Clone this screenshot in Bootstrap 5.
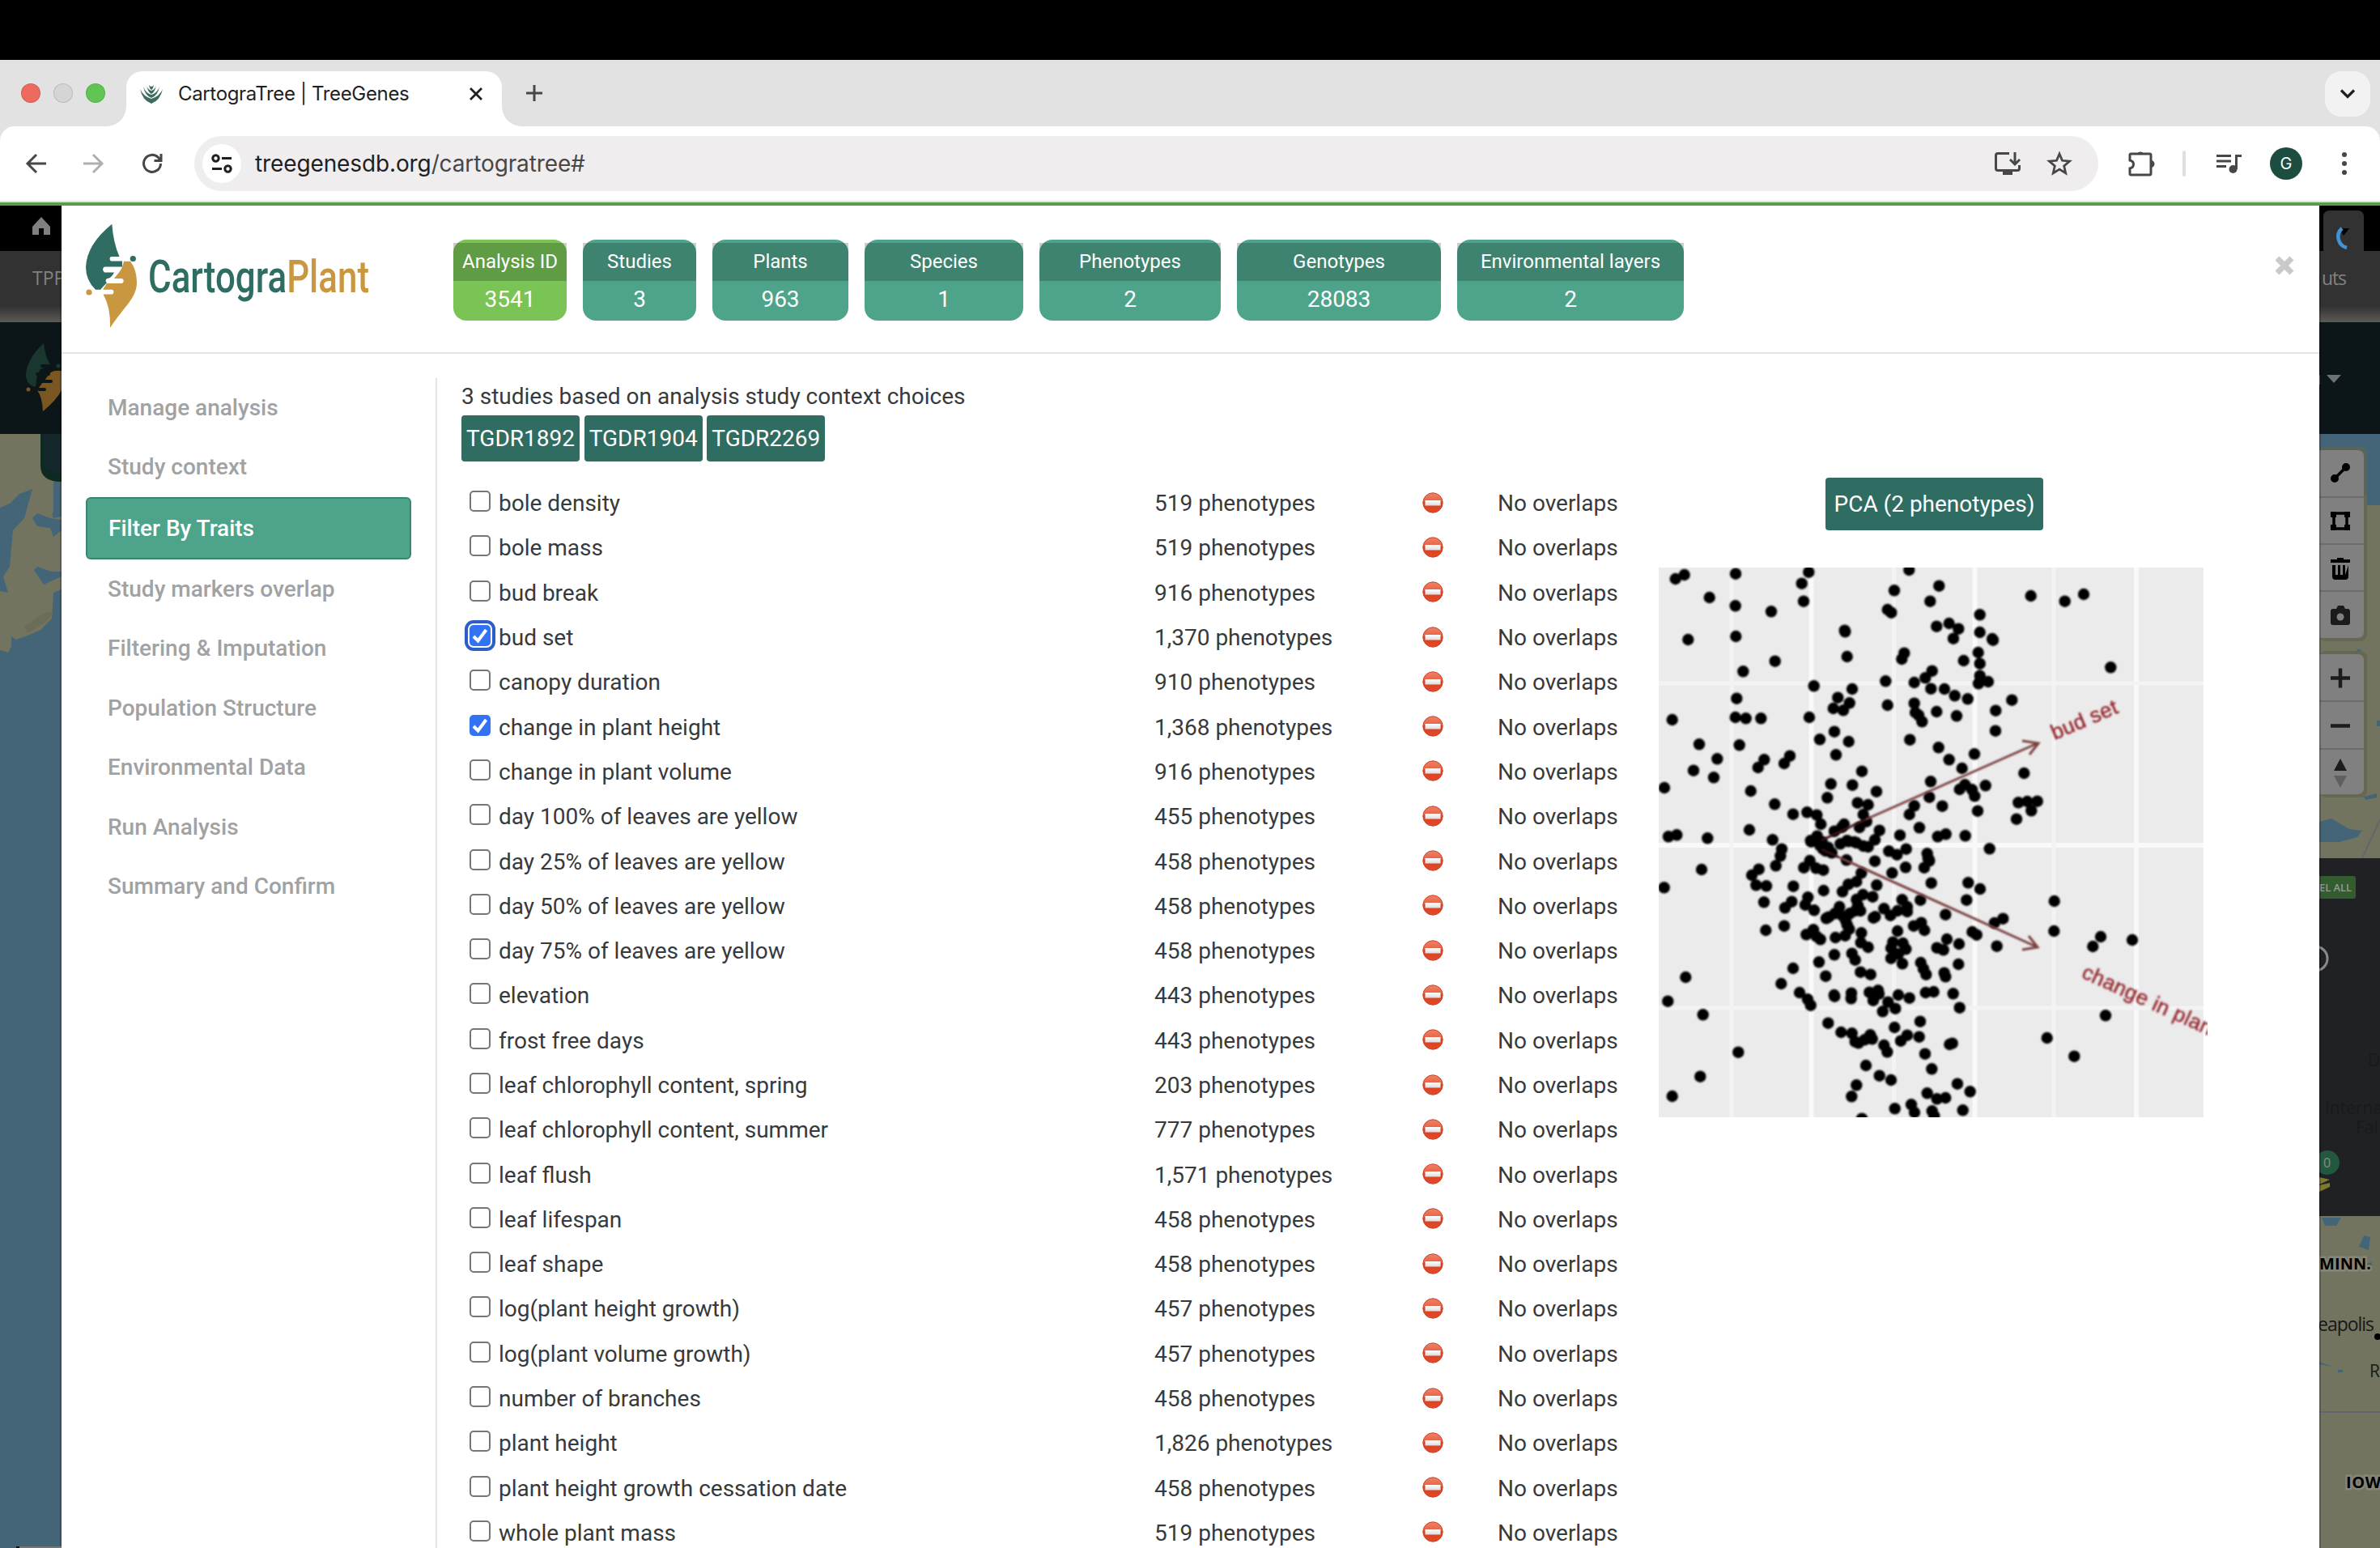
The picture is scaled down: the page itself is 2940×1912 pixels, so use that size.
<!DOCTYPE html>
<html lang="en">
<head>
<meta charset="utf-8">
<title>CartograTree | TreeGenes</title>
<link href="https://cdn.jsdelivr.net/npm/bootstrap@5.3.0/dist/css/bootstrap.min.css" rel="stylesheet">
<style>
  body { width: 2940px; height: 1912px; overflow: hidden; background: #fff; font: 400 28px/1.5 Roboto, sans-serif; color: #373a3c; }
  svg { display: block; flex: none; }
  .menu-strip { height: 74px; background: #000; }
  .tab-strip { height: 82px; background: #e2e2e2; font-family: Inter, sans-serif; color: #1f1f1f; }
  .lights { width: 156px; padding-left: 26px; gap: 16px; height: 82px; }
  .light { width: 24px; height: 24px; border-radius: 50%; border: 1px solid rgba(0,0,0,.12); }
  .browser-tab { width: 464px; height: 68px; margin-top: 14px; background: #fff; border-radius: 20px 20px 0 0; position: relative; padding: 0 23px 13px 17px; }
  .browser-tab::before, .browser-tab::after { content: ""; position: absolute; bottom: 0; width: 24px; height: 24px; }
  .browser-tab::before { left: -24px; background: radial-gradient(circle at 0 0, transparent 23.5px, #fff 24px); }
  .browser-tab::after { right: -24px; background: radial-gradient(circle at 100% 0, transparent 23.5px, #fff 24px); }
  .tab-title { font-size: 24px; letter-spacing: -.35px; margin-left: 19px; white-space: nowrap; }
  .tab-menu { width: 56px; height: 56px; border-radius: 20px; background: #f2f2f2; margin: 14px 12px 0 auto; }
  .strip-bg { background: #e2e2e2; }
  .toolbar { height: 92px; background: #fff; border-radius: 18px 18px 0 0; font-family: Inter, sans-serif; }
  .nav-icons { width: 240px; padding-left: 30px; gap: 44px; }
  .omnibox { width: 2352px; height: 68px; border-radius: 34px; background: #efedee; padding: 0 32px 0 10px; }
  .site-info { width: 48px; height: 48px; border-radius: 50%; background: #fff; }
  .address { font-size: 28px; margin-left: 17px; color: #1f1f1f; letter-spacing: -.12px; }
  .address span { color: #474747; }
  .avatar-g { width: 40px; height: 40px; border-radius: 50%; background: #1d4d40; color: #fff; font-size: 20px; }
  .rule { height: 6px; background: #5a9c4c; border-top: 2px solid #dbe5e0; }
  .stage { height: 1658px; }
  .dialog-pane { width: 2789px; background: #fff; }
  .dialog-top { height: 183px; border-bottom: 2px solid #e5e5e5; padding: 0 0 0 29px; }
  .stats { margin: 42px 0 0 100px; gap: 20px; }
  .stat { height: 100px; border-radius: 16px; background: #4da48b; color: #fff; text-align: center; padding-top: 4px; }
  .stat.current { background: #79c455; }
  .stat-name { height: 47px; line-height: 46px; font-size: 24px; background: rgba(0,0,0,.2); white-space: nowrap; }
  .stat-num { line-height: 45px; }
  .side { width: 462px; padding: 30px 30px 0 30px; }
  .side .nav-link { height: 73.5px; padding: 0 0 0 27px; display: flex; align-items: center; color: #a0a2a3; font-weight: 500; }
  .side .nav-link.active { height: 77px; padding-left: 26px; color: #fff; background: #4da48b; border: 2px solid #3a8570; border-radius: 6px; }
  .main-col { margin-top: 30px; border-left: 2px solid #e5e5e5; padding: 2px 0 0 30px; width: 2325px; }
  .chip { background: #2f6c62; color: #fff; border-radius: 4px; height: 57px; line-height: 57px; padding: 0 6px; }
  .trait-list { width: 1479px; margin-top: 24px; }
  .trait { height: 55.3px; padding-top: 1px; }
  .trait-name { width: 856px; padding-left: 10px; }
  .trait-name input { appearance: none; width: 26px; height: 26px; border: 2px solid #767676; border-radius: 5px; background: #fff; margin: 0 10px 6px 0; flex: none; }
  .trait-name input:checked { border: 0; background: #3273f6 url("data:image/svg+xml,%3Csvg xmlns='http://www.w3.org/2000/svg' viewBox='0 0 26 26'%3E%3Cpath d='M5 14l5.500 5.500L20.500 6' fill='none' stroke='%23fff' stroke-width='4'/%3E%3C/svg%3E"); }
  .trait-name input.focused { outline: 4px solid #2a5fc8; outline-offset: 2px; }
  .trait-count { width: 331px; }
  .trait-mark { width: 93px; padding-bottom: 3px; }
  .pca-btn { background: #2f6c62; color: #fff; border-radius: 4px; height: 65px; width: 269px; font-size: 28px; padding: 0; border: 0; margin: 20px 0 46px 206px; }
</style>
<script src="https://cdn.jsdelivr.net/npm/bootstrap@5.3.0/dist/js/bootstrap.bundle.min.js"></script>
</head>
<body>
<div class="menu-strip"></div>
<div class="tab-strip d-flex align-items-start">
  <div class="lights d-flex align-items-center"><i class="light" style="background:#ed6a5e"></i><i class="light" style="background:#d5d5d5"></i><i class="light" style="background:#61c554"></i></div>
  <div class="browser-tab d-flex align-items-center">
    <svg width="28" height="24" viewBox="0 0 28 24" fill="#3f6b62"><path d="M0 6Q4 15 14 18Q24 15 28 6Q25 20 14 24Q3 20 0 6ZM4 3Q7 11 14 13Q21 11 24 3Q22 14 14 17Q6 14 4 3ZM8 2Q10 7 14 8Q18 7 20 2Q18 10 14 12Q10 10 8 2ZM11 1Q14 5 17 1Q16 6 14 7Q12 6 11 1Z"/></svg>
    <span class="tab-title">CartograTree | TreeGenes</span>
    <svg class="ms-auto" width="18" height="18" viewBox="0 0 18 18" stroke="#1f1f1f" stroke-width="2.800"><path d="M2 2l14 14M16 2L2 16"/></svg>
  </div>
  <svg width="22" height="22" viewBox="0 0 22 22" stroke="#474747" stroke-width="3" style="margin:30px 0 0 29px"><path d="M11 1v20M1 11h20"/></svg>
  <div class="tab-menu d-flex align-items-center justify-content-center"><svg width="20" height="14" viewBox="0 0 20 14" fill="none" stroke="#1f1f1f" stroke-width="3.200"><path d="M2 2.500l8 8 8-8"/></svg></div>
</div>
<div class="strip-bg"><div class="toolbar d-flex align-items-center">
  <div class="nav-icons d-flex">
    <svg width="28" height="28" viewBox="0 0 28 28" fill="none" stroke="#474747" stroke-width="3"><path d="M27 14H5M15 3L4 14l11 11"/></svg>
    <svg width="28" height="28" viewBox="0 0 28 28" fill="none" stroke="#b0b0b0" stroke-width="3"><path d="M1 14h22M13 3l11 11-11 11"/></svg>
    <svg width="28" height="28" viewBox="0 0 28 28" fill="none" stroke="#474747" stroke-width="3"><path d="M24.500 14a10.500 10.500 0 1 1-3-7.500l2.500 3M25 2v8.500h-8.500"/></svg>
  </div>
  <div class="omnibox d-flex align-items-center">
    <div class="site-info d-flex align-items-center justify-content-center"><svg width="26" height="24" viewBox="0 0 26 24" fill="none" stroke="#1f1f1f" stroke-width="3"><circle cx="5.500" cy="5.500" r="3.700"/><circle cx="20.500" cy="18.500" r="3.700"/><path d="M13 5.500h12M1 18.500h12"/></svg></div>
    <div class="address">treegenesdb.org<span>/cartogratree#</span></div>
    <svg class="ms-auto" width="34" height="30" viewBox="0 0 34 30" fill="none" stroke="#474747" stroke-width="3"><path d="M19 2.500H5q-2.500 0-2.500 2.500v16q0 2.500 2.500 2.500h24q2.500 0 2.500-2.500v-4M26 1v14M20 10l6 6 6-6"/><path d="M11 24h12v5H11z" fill="#474747" stroke="none"/></svg>
    <svg style="margin-left:31px" width="32" height="32" viewBox="0 0 32 32" fill="none" stroke="#474747" stroke-width="2.800"><path d="M16 4l3.500 8.300 9 .8-6.800 5.900 2 8.800L16 23.100l-7.700 4.700 2-8.800-6.800-5.900 9-.8z"/></svg>
  </div>
  <svg style="margin-left:36px" width="34" height="34" viewBox="0 0 34 34" fill="none" stroke="#474747" stroke-width="3"><path d="M3 6.500q0-1.500 1.500-1.500h23q1.500 0 1.500 1.500v23q0 1.500-1.500 1.500h-23Q3 31 3 29.500V23q4.500-1 4.500-5T3 13z"/><path d="M12 5a4.500 4.500 0 0 1 8 0zM29 13a4.500 4.500 0 0 1 0 9z" fill="#474747" stroke="none"/></svg>
  <div style="width:4px;height:32px;border-radius:2px;background:#dfdfdf;margin-left:34px"></div>
  <svg style="margin-left:38px" width="32" height="26" viewBox="0 0 32 26" fill="none" stroke="#474747" stroke-width="3"><path d="M0 3.500h18M0 10h18M0 16.500h12M24.500 20V3.500H31"/><circle cx="20.500" cy="20" r="5" fill="#474747" stroke="none"/></svg>
  <div class="avatar-g d-flex align-items-center justify-content-center" style="margin-left:34px">G</div>
  <svg style="margin-left:49px" width="6" height="30" viewBox="0 0 6 30" fill="#474747"><circle cx="3" cy="4" r="3"/><circle cx="3" cy="15" r="3"/><circle cx="3" cy="26" r="3"/></svg>
</div></div>
<div class="rule"></div>

<div class="stage d-flex">
  <svg width="76" height="1658" viewBox="0 254 76 1658" font-family="Open Sans, sans-serif">
    <defs><linearGradient id="fade" x2="0" y2="1"><stop stop-color="#323232"/><stop offset="1" stop-color="#5c5b56"/></linearGradient></defs>
    <rect y="254" width="76" height="1658" fill="#446577"/>
    <path d="M0 536H76V590L66 595V636L76 634V642L62 640L46 634L40 640L46 650L62 652L66 663L76 655V728L66 732L64 764L50 778L34 785L20 790L14 786V798L10 806L0 803V730L10 732L4 712L12 700L16 655L30 640L40 604L24 610L12 622L0 627Z" fill="#727460"/>
    <path d="M76 632L64 634L66 640L76 638ZM76 712L54 722L42 704L46 700L64 706L76 706Z" fill="#446577"/>
    <path d="M30 774L58 755L66 757L54 770L34 782Z" fill="#6b6d58"/>
    <path d="M50 536h26v59q-26 0-26-20z" fill="#0e2a20"/><path d="M54 536h22v50q-22 0-22-16z" fill="#14282b"/>
    <rect y="254" width="76" height="56" fill="#000"/><rect y="310" width="76" height="68" fill="#323232"/><rect y="378" width="76" height="20" fill="url(#fade)"/><rect y="398" width="76" height="138" fill="#0c1619"/>
    <path d="M40 280L51 268L62 280V290H54V282H48V290H40Z" fill="#808080"/>
    <text x="40" y="352" font-size="23" fill="#828282">TPP</text>
    <path d="M54 424Q56 442 62 450L50 456L46 462L44 478Q32 476 32 462Q34 442 54 424Z" fill="#19362f"/>
    <path d="M76 458Q62 456 58 466L50 476L46 482Q52 490 53 508Q70 494 76 482Z" fill="#7a5622"/>
    <g stroke="#0c1619" stroke-width="4" stroke-linecap="round"><path d="M52 452h8M46 462h14M52 471h11M48 481h7"/></g>
    <circle cx="72" cy="452" r="2.500" fill="#19362f"/><circle cx="35" cy="481" r="2.500" fill="#7a5622"/>
    <rect x="74" y="254" width="2" height="1658" fill="#000" opacity=".2"/><path d="M20 1910h4v2h-4z" fill="#111"/><path d="M24 1910h52v2H24z" fill="#777"/>
  </svg>

  <div class="dialog-pane">
    <div class="dialog-top d-flex">
      <svg width="355" height="180" viewBox="105 254 355 180" font-family="Roboto" font-weight="500" font-size="56">
        <path d="M138.300 276.700Q140 300 147.500 317H137Q134 319.700 137 322.500H151V329.500H129Q125 332.500 129 336.500H141Q138 343 133 344H132Q129 347 132 349L124 357.700H118Q106 346 106 330Q107 302 138.300 276.700Z" fill="#2f6c62"/>
        <path d="M153 322.800H161Q169 333 169 349C169 368 153 379 136 405Q137 380 127.500 363.500H139Q142 360.500 139 357.700H127L132 350H151Q154.500 347 151 344H141L147 336.500Q151 332 153 322.800Z" fill="#c99740"/>
        <circle cx="164.300" cy="319.500" r="3.600" fill="#2f6c62"/><circle cx="110" cy="361" r="3.600" fill="#c99740"/>
        <text x="183" y="361" textLength="273" lengthAdjust="spacingAndGlyphs" fill="#2f6c62">Cartogra<tspan fill="#c99740">Plant</tspan></text>
      </svg>
      <div class="stats d-flex align-items-start" id="stats"></div>
      <svg style="margin:62px 31px 0 auto" width="24" height="24" viewBox="0 0 24 24" stroke="#c9c9c9" stroke-width="7"><path d="M3 3l18 18M21 3L3 21"/></svg>
    </div>
    <div class="d-flex">
      <nav class="side nav flex-column flex-nowrap flex-shrink-0">
        <a class="nav-link">Manage analysis</a><a class="nav-link">Study context</a><a class="nav-link active">Filter By Traits</a><a class="nav-link">Study markers overlap</a><a class="nav-link">Filtering &amp; Imputation</a><a class="nav-link">Population Structure</a><a class="nav-link">Environmental Data</a><a class="nav-link">Run Analysis</a><a class="nav-link">Summary and Confirm</a>
      </nav>
      <div class="main-col">
        <div style="height:44px;line-height:42px">3 studies based on analysis study context choices</div>
        <div class="d-flex" style="gap:5.7px"><span class="chip">TGDR1892</span><span class="chip">TGDR1904</span><span class="chip">TGDR2269</span></div>
        <div class="d-flex">
          <div class="trait-list" id="traits"></div>
          <div>
            <button class="btn pca-btn">PCA (2 phenotypes)</button>
            <svg width="678" height="679" viewBox="2049 701 678 679">
              <defs><filter id="soft" x="-5%" y="-5%" width="110%" height="110%"><feGaussianBlur stdDeviation=".9"/></filter></defs>
              <rect x="2049" y="701" width="673" height="679" fill="#ebebeb"/>
              <g stroke="#f9f9f9" stroke-width="6"><path d="M2237.500 701V1380M2439.500 701V1380M2639 701V1380M2049 1044H2722"/></g>
              <g stroke="#f3f3f3" stroke-width="5"><path d="M2139 701V1380M2339.500 701V1380M2537 701V1380M2049 844H2722M2049 1245H2722"/></g>
              <g id="dots" fill="#000" filter="url(#soft)"></g>
              <g fill="none" stroke="#7c4343" stroke-width="3" filter="url(#soft)"><path d="M2305 1012L2517 918M2498 915L2518 918L2507 932M2272 1059L2517 1170M2506 1156L2517 1170L2498 1173"/><path d="M2250 1038L2305 1012M2250 1049L2272 1059" stroke="#3a1518"/></g>
              <g font-family="Liberation Sans" font-size="26" fill="#94282e" stroke="#94282e" stroke-width=".5" filter="url(#soft)"><text transform="translate(2538 914) rotate(-23)" textLength="87">bud set</text><text transform="translate(2570 1207) rotate(24.500)" textLength="174">change in plan</text></g>
            </svg>
          </div>
        </div>
      </div>
    </div>
  </div>

  <svg width="75" height="1658" viewBox="2865 254 75 1658" font-family="Open Sans, sans-serif">
    <rect x="2865" y="254" width="75" height="1658" fill="#727460"/>
    <path d="M2865 536H2940V624H2924V612H2865Z" fill="#446577"/>
    <path d="M2865 1015L2880 1011L2902 1024L2918 1026L2912 1034L2890 1040H2865ZM2920 984L2936 980V985L2922 988ZM2936 890h4v7h-4zM2908 810l10-8h-6z" fill="#446577"/>
    <path d="M2918 1060L2940 1012" stroke="#666" stroke-width="2"/>
    <rect x="2865" y="552" width="59" height="240" rx="8" fill="#62644f" opacity=".7"/><rect x="2865" y="804" width="59" height="181" rx="8" fill="#62644f" opacity=".7"/>
    <path d="M2865 556h47q8 0 8 8v216q0 8-8 8h-47zM2865 808h47q8 0 8 8v157q0 8-8 8h-47z" fill="#808080"/>
    <path d="M2865 614h55M2865 672h55M2865 730h55M2865 866h55M2865 925h55" stroke="#6c6c6c" stroke-width="2"/>
    <g stroke="#000" stroke-width="3.500" fill="none"><path d="M2883 592L2898 577"/><path d="M2883 634h16v19h-16z"/></g>
    <g><circle cx="2884" cy="591" r="5"/><circle cx="2898" cy="577" r="5"/><path d="M2879 632h7v7h-7zM2896 632h7v7h-7zM2879 648h7v7h-7zM2896 648h7v7h-7z"/><path d="M2879 691h8v-2h8v2h8v4h-24zM2881 698h4v12h3v-12h3v12h3v-12h3v12l4-12v14q0 4-4 4h-12q-4 0-4-4z"/></g>
    <path d="M2879 755q0-3 3-3h4l2-4h7l2 4h3q3 0 3 3v14q0 3-3 3h-18q-3 0-3-3z" fill="#1c1c1c"/><circle cx="2891" cy="762" r="4.500" fill="#808080"/>
    <path d="M2879 837.500h24M2891 825.500v24M2879 896.500h24" stroke="#1c1c1c" stroke-width="4.500"/>
    <path d="M2883 952L2891 937L2899 952Z" fill="#1c1c1c"/><path d="M2883 958L2891 973L2899 958Z" fill="#606060"/>
    <rect x="2865" y="1060" width="75" height="442" fill="#202124"/>
    <path d="M2865 1082h42q3 0 3 3v22q0 3-3 3h-42z" fill="#335c2f"/><text x="2865" y="1101" font-size="13" font-weight="600" fill="#929a92" textLength="40">EL ALL</text>
    <circle cx="2860" cy="1184" r="15" fill="none" stroke="#8a8a8a" stroke-width="3"/>
    <g fill="#191a1d" font-size="21"><text x="2925" y="1317">D</text><text x="2872" y="1376">Interna</text><text x="2910" y="1400">Fal</text></g>
    <path d="M2865 1454l13 3-13 6zM2865 1464l13-3v5l-13 6z" fill="#80792c"/>
    <circle cx="2875" cy="1436" r="15" fill="#235840"/><text x="2870" y="1442" font-size="16" fill="#888">0</text>
    <path d="M2868 1504h24l-6 10h-14zM2914 1540l6-14 8 2-2 16zM2920 1562l10 2v-5zM2865 1682l16 6-16-3zM2888 1692h6v3h-6z" fill="#446577"/>
    <g stroke="#85867a" stroke-width="5" paint-order="stroke" fill="#000"><text x="2865" y="1568" font-size="20" font-weight="700" textLength="64">MINN.</text><text x="2898" y="1838" font-size="20" font-weight="700" textLength="43">IOW</text></g>
    <g fill="#181818" font-size="23"><text x="2863" y="1644" textLength="70">eapolis</text><text x="2927" y="1701" font-size="21">R</text></g><circle cx="2937" cy="1651" r="4"/>
    <path d="M2865 1744H2940" stroke="#646371" stroke-width="2"/>
    <rect x="2865" y="254" width="75" height="56" fill="#000"/><rect x="2865" y="310" width="75" height="68" fill="#323232"/><rect x="2865" y="378" width="75" height="20" fill="url(#fade)"/><rect x="2865" y="398" width="75" height="138" fill="#0c1619"/>
    <path d="M2870 310V268q0-8 8-8h34q8 0 8 8v42z" fill="#323232"/><path d="M2889 282h13l-7 9z" fill="#000"/>
    <path d="M2893 282A14 14 0 0 0 2899 306" fill="none" stroke="#4392d6" stroke-width="4.500"/>
    <text x="2868" y="352" font-size="23" fill="#828282" textLength="31">uts</text>
    <path d="M2874 463h18l-9 10z" fill="#6d7374"/><path d="M2865 463h1v12h-1z" fill="#555"/>
    <rect x="2865" y="254" width="2" height="1658" fill="#000" opacity=".2"/>
  </svg>
</div>
<script>
  const stats = [["Analysis ID", 3541, 140], ["Studies", 3, 140], ["Plants", 963, 168], ["Species", 1, 196], ["Phenotypes", 2, 224], ["Genotypes", 28083, 252], ["Environmental layers", 2, 280]];
  document.getElementById("stats").innerHTML = stats.map(([n, v, w], i) =>
    `<div class="stat${i ? "" : " current"}" style="width:${w}px"><div class="stat-name">${n}</div><div class="stat-num">${v}</div></div>`).join("");

  const traits = [["bole density","519"],["bole mass","519"],["bud break","916"],["bud set","1,370"],["canopy duration","910"],["change in plant height","1,368"],["change in plant volume","916"],["day 100% of leaves are yellow","455"],["day 25% of leaves are yellow","458"],["day 50% of leaves are yellow","458"],["day 75% of leaves are yellow","458"],["elevation","443"],["frost free days","443"],["leaf chlorophyll content, spring","203"],["leaf chlorophyll content, summer","777"],["leaf flush","1,571"],["leaf lifespan","458"],["leaf shape","458"],["log(plant height growth)","457"],["log(plant volume growth)","457"],["number of branches","458"],["plant height","1,826"],["plant height growth cessation date","458"],["whole plant mass","519"]];
  const stop = `<svg width="26" height="26" viewBox="0 0 26 26"><defs><linearGradient id="red" x2="0" y2="1"><stop stop-color="#ee8268"/><stop offset=".35" stop-color="#e8694c"/><stop offset=".5" stop-color="#dc3f20"/><stop offset="1" stop-color="#e04a2a"/></linearGradient><linearGradient id="bar" x2="0" y2="1"><stop stop-color="#fff"/><stop offset="1" stop-color="#dcdcdc"/></linearGradient></defs><circle cx="13" cy="13" r="12.200" fill="url(#red)" stroke="#c8452c"/><rect x="3.500" y="10" width="19" height="6.500" fill="url(#bar)"/></svg>`;
  document.getElementById("traits").innerHTML = traits.map(([n, c], i) =>
    `<div class="trait d-flex align-items-center"><label class="trait-name d-flex align-items-center"><input type="checkbox"${i == 3 || i == 5 ? " checked" : ""}${i == 3 ? ' class="focused"' : ""}>${n}</label><div class="trait-count">${c} phenotypes</div><div class="trait-mark">${stop}</div><div>No overlaps</div></div>`).join("");

  // Scatter points by tile: tile origin, then x,y pairs in thirds of a pixel
  const tiles = [
    [2040, 690, "89,75 122,60 312,56 215,144 311,175 583,50 557,92 564,158 444,196 136,300 313,288 458,380 340,418 602,472 316,518 77,597 311,588 350,592 406,592 585,588 177,688 326,691 244,742 418,745 395,774 156,785 231,811 513,731 492,759 48,849 368,861 457,910 525,947 577,940 613,950 628,984 363,1005 63,1030 94,1024 208,1036 449,1042 955,42 900,118 875,189 889,200 716,266 718,271 725,363 937,350 928,372 868,454 974,459 1015,442 875,543 974,536 744,483 691,515 734,535 674,555 711,562 978,570 990,580 1003,604 958,671 678,641 624,670 731,678 684,727 780,788 665,835 745,839 834,863 652,886 764,905 803,912 785,948 797,974 771,996 714,984 706,995 678,1010 845,1007 921,1025 993,997 974,916 956,948 614,1028 590,1045 725,1045 752,1050 828,1042"],
    [2380, 690, "46,101 13,158 386,138 512,158 582,132 197,208 37,251 83,240 118,260 99,296 197,273 243,297 246,302 191,348 137,378 197,389 197,434 228,456 192,463 20,416 16,482 66,483 104,508 152,520 316,524 37,567 256,563 111,583 255,638 682,403 44,700 177,724 83,745 131,777 15,826 218,841 361,795 122,855 142,838 168,856 178,880 10,884 58,917 189,935 340,904 373,900 410,899 388,934 333,965 41,1030 71,1021 143,1027"],
    [2040, 1035, "483,41 478,67 461,103 186,117 47,184 398,116 372,138 388,175 426,178 417,238 526,179 520,236 495,259 424,342 492,326 587,84 565,110 610,112 637,119 580,220 570,248 603,268 638,195 635,40 645,48 668,55 625,28 608,12 723,82 828,86 778,130 760,162 730,172 708,199 835,175 820,218 784,210 760,228 880,49 910,62 944,41 942,109 892,130 1022,58 1028,80 1011,110 997,230 929,229 948,255 948,273 912,270 886,287 862,262 829,292 823,296 697,255 680,280 657,293 648,298 710,290 735,280 755,270 775,270 720,305 733,338 725,322 765,250 1000,314 972,326 1012,342 912,345 778,352 776,388 803,405 718,362 682,369 600,340 574,358 612,365 626,376 678,433 621,460 743,428 755,452 775,497 812,506 646,512 525,483 481,540 549,573 579,598 590,620 677,582 679,587 741,575 740,595 127,516 61,605 191,655 322,794 181,884 77,957 895,386 932,390 888,408 943,412 888,446 915,430 930,466 998,462 1008,485 1018,506 808,572 840,565 843,578 822,602 915,582 956,593 877,608 904,632 857,643 1016,573 655,686 703,720 743,724 755,755 767,760 790,748 811,730 818,745 901,702 996,680 948,731 924,752 992,737 862,768 874,793 1014,800 795,843 845,881 888,897 760,916 742,958 1022,946 902,1003 963,988 975,1017 780,1040 700,22 730,13 760,18 785,30 803,33 632,14 655,35 592,14"],
    [2380, 1035, "233,40 5,75 10,85 17,167 154,166 198,189 148,230 70,284 251,315 283,299 169,348 185,359 260,401 75,375 120,393 38,407 62,415 118,468 65,500 70,514 26,570 98,577 122,629 473,234 472,345 645,366 616,402 762,378 663,658 446,741 547,809 85,765 95,761 19,856 114,911 161,940 38,967 70,963 20,1012 28,1030 134,1009"]
  ];
  document.getElementById("dots").innerHTML = tiles.map(([ox, oy, s]) => s.split(" ").map(p => {
    const [x, y] = p.split(",");
    return `<circle cx="${(ox + x / 3).toFixed(1)}" cy="${(oy + y / 3).toFixed(1)}" r="7.200"/>`;
  }).join("")).join("");
</script>
</body>
</html>
